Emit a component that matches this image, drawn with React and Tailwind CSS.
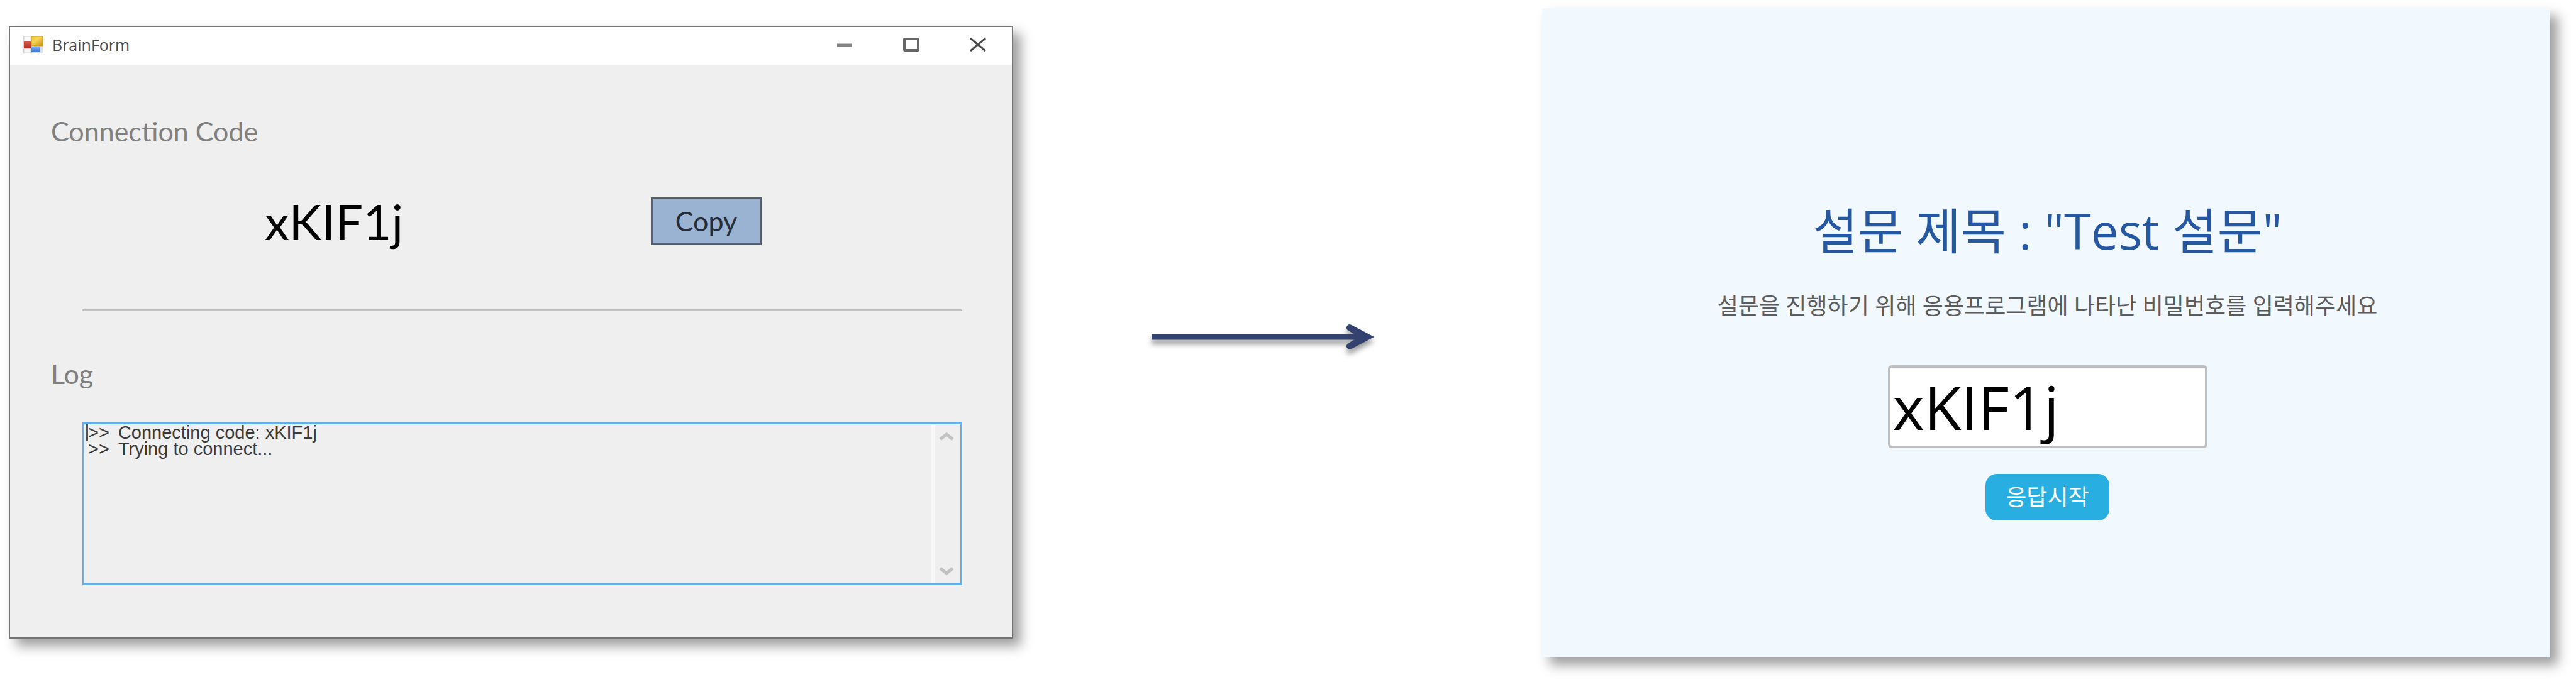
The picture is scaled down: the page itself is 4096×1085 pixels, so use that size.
import React from "react";

function FormIcon() {
  return (
    <svg width="32" height="28" viewBox="0 0 32 28" aria-hidden="true">
      <defs>
        <linearGradient id="yellowTile" x1="0" y1="0" x2="1" y2="1">
          <stop offset="0" stopColor="#f2c832" />
          <stop offset="0.4" stopColor="#f9d65c" />
          <stop offset="1" stopColor="#c68f00" />
        </linearGradient>
        <linearGradient id="blueTile" x1="0" y1="0" x2="0" y2="1">
          <stop offset="0" stopColor="#7db4f5" />
          <stop offset="1" stopColor="#3a6fd0" />
        </linearGradient>
        <linearGradient id="redTile" x1="0" y1="0" x2="0" y2="1">
          <stop offset="0" stopColor="#d9564a" />
          <stop offset="1" stopColor="#b52a22" />
        </linearGradient>
      </defs>
      <rect x="0.5" y="0.5" width="31" height="27" fill="#e6e6e6" stroke="#d6d6d6" />
      <rect x="2" y="2" width="9" height="6" fill="#fafafa" />
      <rect x="2" y="21" width="9" height="5" fill="#f7f7f7" />
      <rect x="26" y="18" width="5" height="8" fill="#dedede" />
      <rect x="1" y="9" width="11" height="11" fill="url(#redTile)" />
      <rect x="13" y="1" width="18" height="15" fill="url(#yellowTile)" stroke="#c99a1a" />
      <rect x="13" y="17" width="13" height="9" fill="url(#blueTile)" />
    </svg>
  );
}

function TitleBar() {
  return (
    <header className="flex h-[60px] items-center bg-white pb-1 pl-[21px] pr-[41px]">
      <FormIcon />
      <h1 className="ml-[14px] font-['Open_Sans',sans-serif] text-[25px] leading-8 text-[#4a4a4a]">BrainForm</h1>
      <div className="ml-auto flex items-center gap-[80px]">
        <button type="button" aria-label="Minimize">
          <svg className="block" width="26" height="24" viewBox="0 0 26 24">
            <path d="M1 13H25" stroke="#858585" strokeWidth="5" />
          </svg>
        </button>
        <button type="button" aria-label="Maximize">
          <svg className="block" width="26" height="24" viewBox="0 0 26 24" fill="none">
            <rect x="2" y="3" width="22" height="18" rx="1" stroke="#666" strokeWidth="4" />
          </svg>
        </button>
        <button type="button" aria-label="Close">
          <svg className="block" width="26" height="24" viewBox="0 0 26 24">
            <path d="M1 2L25 22M25 2L1 22" stroke="#4a4a4a" strokeWidth="3" />
          </svg>
        </button>
      </div>
    </header>
  );
}

function LogBox() {
  return (
    <div
      role="log"
      aria-labelledby="log-title"
      className="ml-[50px] mr-[14px] mt-[53px] flex h-[259px] border-[3px] border-[#62aeea]"
    >
      <div className="grow pl-[3px] font-['Liberation_Sans',sans-serif] text-[29px] leading-[26px] text-[#3a3a3a]">
        <p className="flex gap-[14px] border-l-[3px] border-[#505050]">
          <span>&gt;&gt;</span>
          <span>Connecting code: xKIF1j</span>
        </p>
        <p className="flex gap-[14px] pl-[3px]">
          <span>&gt;&gt;</span>
          <span>Trying to connect...</span>
        </p>
      </div>
      <div className="flex w-[46px] flex-col items-center justify-between border-l-[6px] border-[#f7f7f7] py-3 pr-1">
        <button type="button" aria-label="Scroll up">
          <svg className="block" width="24" height="14" viewBox="0 0 24 14" fill="none">
            <path d="M2 12L12 4L22 12" stroke="#c2c2c2" strokeWidth="5" />
          </svg>
        </button>
        <button type="button" aria-label="Scroll down">
          <svg className="block" width="24" height="14" viewBox="0 0 24 14" fill="none">
            <path d="M2 2L12 10L22 2" stroke="#c2c2c2" strokeWidth="5" />
          </svg>
        </button>
      </div>
    </div>
  );
}

function ConnectionWindow() {
  return (
    <section className="mt-[41px] border-2 border-[#757575] bg-[#efefef] font-['Lato',sans-serif] shadow-[12px_12px_18px_rgba(0,0,0,0.38)]">
      <TitleBar />
      <div className="px-[65px] pb-[83px] pt-[82px]">
        <h2 className="text-[43px] leading-[48px] text-[#808080]">Connection Code</h2>
        <div className="mt-[81px] flex items-center justify-between pl-[340px] pr-[333px]">
          <output className="text-[78px] leading-[76px] text-black">xKIF1j</output>
          <button
            type="button"
            className="h-[76px] w-[176px] border-[3px] border-[#555f6b] bg-[#9ab3d3] text-[43px] leading-[48px] text-[#262d36]"
          >
            Copy
          </button>
        </div>
        <hr className="ml-[50px] mr-[14px] mt-[102px] border-t-[3px] border-[#bfbfbf]" />
        <h2 id="log-title" className="mt-[76px] text-[43px] leading-[48px] text-[#808080]">
          Log
        </h2>
        <LogBox />
      </div>
    </section>
  );
}

function FlowArrow() {
  return (
    <div className="flex justify-center pr-12 pt-[506px]">
      <svg className="overflow-visible drop-shadow-[0_7px_4px_rgba(0,0,0,0.4)]" width="354" height="60" viewBox="0 0 354 60" aria-hidden="true">
        <path d="M0 30H338" stroke="#344270" strokeWidth="9" />
        <path
          d="M354 30L317 10.600A5 5 0 0 0 312.500 19.500L329 30L312.500 40.500A5 5 0 0 0 317 49.400Z"
          fill="#344270"
        />
      </svg>
    </div>
  );
}

function SurveyPanel() {
  return (
    <main className="mt-[13px] flex flex-col items-center bg-[#f1f9ff] pb-[218px] pl-1 pt-[304px] font-['Open_Sans','Noto_Sans_CJK_KR',sans-serif] shadow-[12px_12px_18px_rgba(0,0,0,0.38)]">
      <h1 className="text-[78px] leading-[100px] text-[#2658a1]">설문 제목 : "Test 설문"</h1>
      <label htmlFor="code" className="mt-[46px] text-[36px] leading-[48px] text-[#5c5c5c]">
        설문을 진행하기 위해 응용프로그램에 나타난 비밀번호를 입력해주세요
      </label>
      <input
        id="code"
        type="text"
        defaultValue="xKIF1j"
        className="mt-[70px] h-[132px] w-[508px] rounded-md border-4 border-[#bcbfc1] bg-white px-1 text-[96px] text-black"
      />
      <button
        type="button"
        className="mt-[41px] h-[74px] w-[197px] rounded-[18px] bg-[#29aee1] text-[36px] leading-[48px] text-white"
      >
        응답시작
      </button>
    </main>
  );
}

export default function App() {
  return (
    <div className="grid min-h-screen grid-cols-[1597fr_841fr_1603fr] items-start bg-white pl-[14px] pr-[41px]">
      <ConnectionWindow />
      <FlowArrow />
      <SurveyPanel />
    </div>
  );
}
